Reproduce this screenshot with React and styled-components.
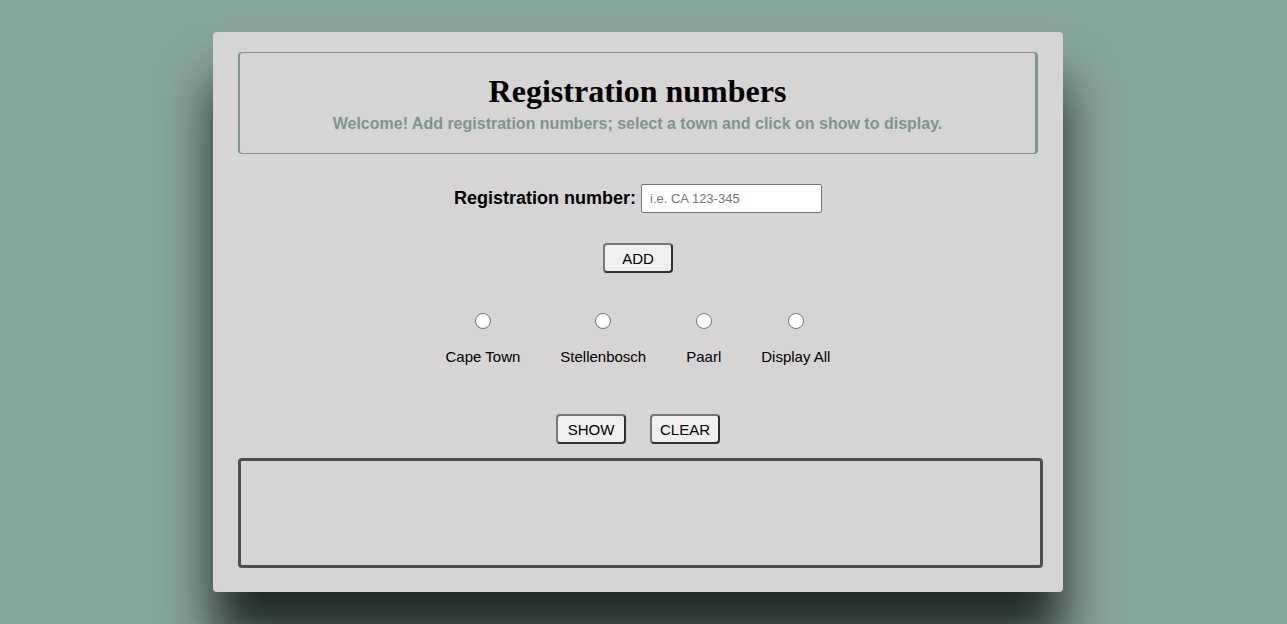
import React from "react";
import styled, { createGlobalStyle } from "styled-components";

const Global = createGlobalStyle`
  html, body { margin: 0; padding: 0; }
  body {
    background: #87a59c;
    font-family: "Liberation Sans", Arial, sans-serif;
    height: 624px;
    overflow: hidden;
  }
`;

const Card = styled.main`
  box-sizing: border-box;
  width: 850px;
  height: 560px;
  margin: 32px 0 0 213px;
  padding: 20px 20px 23px 25px;
  background: #d6d4d5;
  border-radius: 4px;
  box-shadow: 0 50px 50px rgba(0, 0, 0, 0.75);
  display: flex;
  flex-direction: column;
  align-items: flex-start;
`;

const Header = styled.header`
  box-sizing: border-box;
  width: 800px;
  height: 102px;
  border-style: solid;
  border-color: #7a968f;
  border-width: 1px 3px 1px 2px;
  border-radius: 4px;
  padding-top: 20px;
  text-align: center;
`;

const Title = styled.h1`
  margin: 0;
  font-family: "Liberation Serif", "Times New Roman", serif;
  font-size: 32px;
  line-height: 37px;
  font-weight: bold;
  color: #000;
`;

const Subtitle = styled.p`
  margin: 5px 0 0;
  font-size: 16px;
  line-height: 18px;
  font-weight: bold;
  color: #7b968f;
`;

const Centered = styled.div`
  width: 800px;
  display: flex;
  justify-content: center;
  align-items: ${(p) => p.$align || "center"};
  margin-top: ${(p) => p.$top}px;
  gap: ${(p) => p.$gap || 0}px;
`;

const FieldLabel = styled.label`
  font-size: 18px;
  font-weight: bold;
  color: #000;
  margin-right: 5px;
`;

const TextInput = styled.input`
  box-sizing: border-box;
  width: 181px;
  height: 29px;
  border: 1px solid #767676;
  border-radius: 2px;
  background: #fff;
  padding: 0 8px;
  font-family: "Liberation Sans", Arial, sans-serif;
  font-size: 13px;
  outline: none;
  &::placeholder { color: #757575; }
`;

const Button = styled.button`
  box-sizing: border-box;
  width: 70px;
  height: 30px;
  padding: 0;
  background: #efefef;
  border: 2px solid;
  border-color: #767676 #2f2f2f #2f2f2f #767676;
  border-radius: 4px;
  font-family: "Liberation Sans", Arial, sans-serif;
  font-size: 15px;
  color: #000;
  cursor: pointer;
`;

const TownOption = styled.label`
  display: flex;
  flex-direction: column;
  align-items: center;
  gap: 19px;
  font-size: 15px;
  line-height: 17px;
  color: #000;
`;

const Radio = styled.input`
  appearance: none;
  margin: 0;
  width: 16px;
  height: 16px;
  border-radius: 50%;
  border: 1px solid #767676;
  background: #fff;
  box-sizing: border-box;
`;

const Output = styled.div`
  box-sizing: border-box;
  width: 805px;
  height: 110px;
  margin-top: 14px;
  border: 3px solid #4f4d4e;
  border-radius: 4px;
`;

const towns = ["Cape Town", "Stellenbosch", "Paarl", "Display All"];

export default function App() {
  return (
    <>
      <Global />
      <Card>
        <Header>
          <Title>Registration numbers</Title>
          <Subtitle>
            Welcome! Add registration numbers; select a town and click on show to display.
          </Subtitle>
        </Header>
        <Centered $top={30}>
          <FieldLabel htmlFor="reg">Registration number:</FieldLabel>
          <TextInput id="reg" type="text" placeholder="i.e. CA 123-345" />
        </Centered>
        <Centered $top={30}>
          <Button>ADD</Button>
        </Centered>
        <Centered $top={40} $gap={40} $align="flex-start">
          {towns.map((t) => (
            <TownOption key={t}>
              <Radio type="radio" name="town" value={t} />
              {t}
            </TownOption>
          ))}
        </Centered>
        <Centered $top={49} $gap={24}>
          <Button>SHOW</Button>
          <Button>CLEAR</Button>
        </Centered>
        <Output />
      </Card>
    </>
  );
}
